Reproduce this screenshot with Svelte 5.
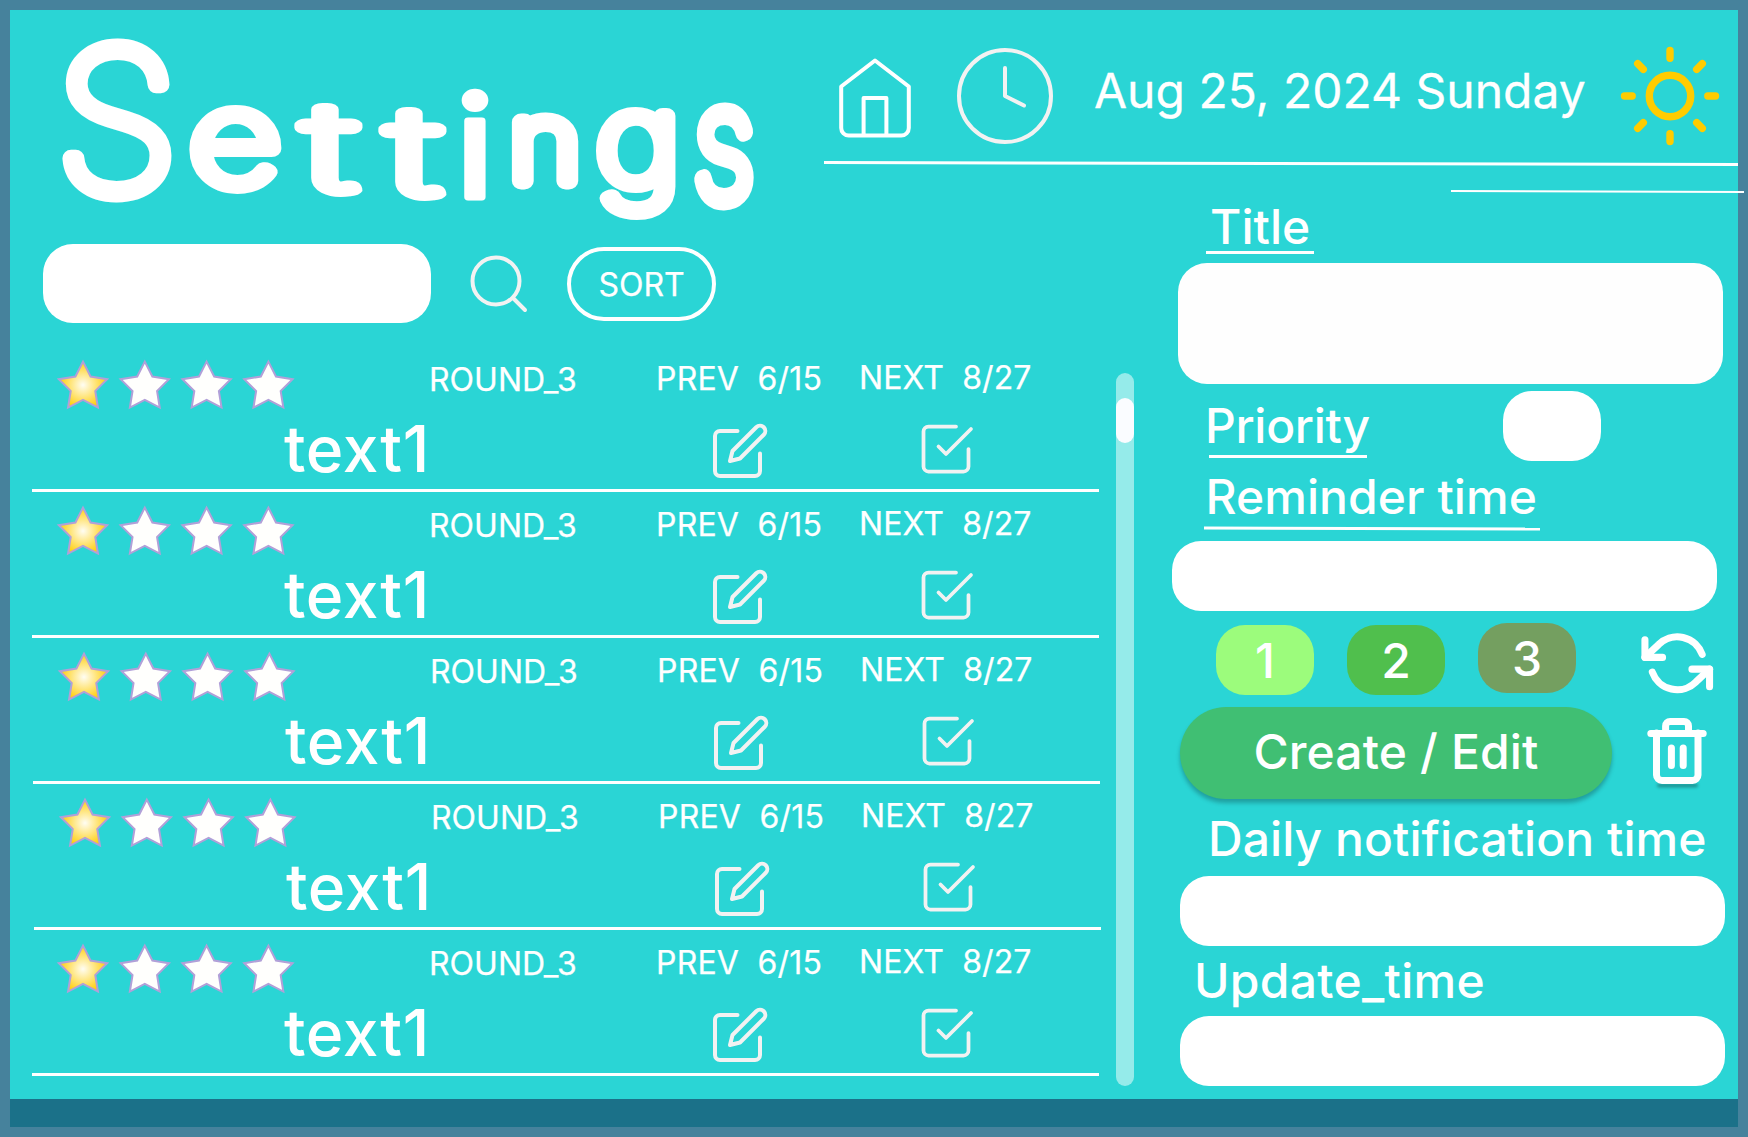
<script>
  // Horizontal nudge of each list row, in pixels.
  const rows = [0, 0, 1, 2, 0].map((shift, id) => ({
    id, shift, title: 'text1', round: 'ROUND_3', prev: '6/15', next: '8/27', rating: 1
  }));

  const stars = [0, 1, 2, 3];

  function starPoints(cx, cy, outer, inner) {
    return Array.from({ length: 10 }, (_, i) => {
      const r = i % 2 ? inner : outer;
      const a = (Math.PI / 5) * i;
      return `${(cx + r * Math.sin(a)).toFixed(2)},${(cy - r * Math.cos(a)).toFixed(2)}`;
    }).join(' ');
  }

  // Centre x, baseline, size, horizontal stretch, weight and outline of each letter.
  const logo = [
    { c: 'S', x: 117, y: 192, size: 196, sx: 1.02, w: 100, line: 17 },
    { c: 'e', x: 235, y: 184, size: 128, sx: 1.25, w: 100, line: 16 },
    { c: 't', x: 330, y: 190, size: 120, sx: 1.75, w: 100, line: 13 },
    { c: 't', x: 414, y: 194, size: 120, sx: 1.75, w: 100, line: 13 },
    { c: 'i', x: 475, y: 197, size: 140, sx: 1.1, w: 400, line: 7 },
    { c: 'n', x: 545, y: 181, size: 108, sx: 1.12, w: 100, line: 17 },
    { c: 'g', x: 638, y: 185, size: 126, sx: 1.15, w: 100, line: 16 },
    { c: 's', x: 724, y: 199, size: 158, sx: 0.78, w: 100, line: 19 }
  ];

  const badges = [
    { label: '1', tone: 'lime' },
    { label: '2', tone: 'green' },
    { label: '3', tone: 'olive' }
  ];
</script>

<div class="screen">
  <div class="top">
    <svg class="logo" viewBox="10 10 790 215" width="790" height="215">
      {#each logo as g}
        <text transform="translate({g.x} {g.y}) scale({g.sx} 1)" font-size={g.size} font-weight={g.w} stroke-width={g.line}>{g.c}</text>
      {/each}
    </svg>

    <header>
      <div class="bar">
        <svg class="home" viewBox="838 56 76 84" width="76" height="84">
          <path d="M841.2 86.5 L875 60.5 L908.8 86.5 V128 a7.5 7.5 0 0 1 -7.5 7.5 H848.7 a7.5 7.5 0 0 1 -7.5 -7.5 Z" />
          <path d="M863.6 135 V98 H886.4 V135" />
        </svg>
        <svg class="clock" viewBox="0 0 96 96" width="96" height="96">
          <circle cx="48" cy="48" r="46" />
          <path d="M48 20V48L67 57.5" />
        </svg>
        <span class="date">Aug 25, 2024 Sunday</span>
        <svg class="sun" viewBox="-50 -50 100 100" width="100" height="100">
          <circle r="20.7" />
          <path d="M0 -45.5V-37.8M0 45.5V37.8M-45.5 0H-37.8M45.5 0H37.8M-32.3 -32.3L-26.7 -26.7M32.3 -32.3L26.7 -26.7M-32.3 32.3L-26.7 26.7M32.3 32.3L26.7 26.7" />
        </svg>
      </div>
      <svg class="rules" viewBox="824 158 924 40" width="924" height="40">
        <line x1="824" y1="162.5" x2="1738" y2="164.5" stroke-width="3" />
        <line x1="1451" y1="190.9" x2="1744" y2="192" stroke-width="2" />
      </svg>
    </header>
  </div>

  <div class="body">
    <section class="left">
      <div class="toolbar">
        <div class="search"></div>
        <svg class="lens" viewBox="468 253 60 60" width="60" height="60">
          <circle cx="496" cy="281" r="23.5" />
          <path d="M513.5 298.5L525 310" />
        </svg>
        <div class="sort">SORT</div>
      </div>

      <div class="list">
        {#each rows as row (row.id)}
          <article class="row" style:--shift="{row.shift}px">
            <div class="meta">
              <svg class="stars" viewBox="56 358 240 54" width="240" height="54">
                <defs>
                  <radialGradient id="gold{row.id}" gradientUnits="userSpaceOnUse" cx="83" cy="385" r="25">
                    <stop offset="0" stop-color="#fffdf3" />
                    <stop offset="1" stop-color="#ffcc00" />
                  </radialGradient>
                </defs>
                {#each stars as s}
                  <polygon
                    points={starPoints(83 + s * 61.8, 387, 25.4, 12.9)}
                    fill={s < row.rating ? `url(#gold${row.id})` : '#fffffd'}
                  />
                {/each}
              </svg>
              <span class="round">{row.round}</span>
              <span class="prev">PREV&nbsp; {row.prev}</span>
              <span class="next">NEXT&nbsp; {row.next}</span>
            </div>
            <div class="main">
              <span class="title">{row.title}</span>
              <svg class="edit" viewBox="0 0 24 24" width="60" height="60">
                <path d="M11 4H4a2 2 0 0 0-2 2v14a2 2 0 0 0 2 2h14a2 2 0 0 0 2-2v-7" />
                <path d="M18.5 2.5a2.121 2.121 0 0 1 3 3L12 15l-4 1 1-4 9.5-9.5z" />
              </svg>
              <svg class="check" viewBox="0 0 24 24" width="60" height="60">
                <path d="M9 11l3 3L22 4" />
                <path d="M21 12v7a2 2 0 0 1-2 2H5a2 2 0 0 1-2-2V5a2 2 0 0 1 2-2h11" />
              </svg>
            </div>
          </article>
        {/each}
      </div>
    </section>

    <div class="track"><div class="thumb"></div></div>

    <section class="form">
      <div class="label name">Title</div>
      <div class="field tall"></div>
      <div class="priority">
        <div class="label">Priority</div>
        <div class="pill"></div>
      </div>
      <div class="label reminder">Reminder time</div>
      <div class="field remind"></div>
      <div class="badges">
        {#each badges as b}
          <div class="badge {b.tone}">{b.label}</div>
        {/each}
        <svg class="refresh" viewBox="0 0 24 24" width="70.5" height="70.5">
          <path d="M1 4v6h6M23 20v-6h-6" />
          <path d="M20.49 9A9 9 0 0 0 5.64 5.64L1 10m22 4l-4.64 4.36A9 9 0 0 1 3.51 15" />
        </svg>
      </div>
      <div class="actions">
        <div class="create">Create / Edit</div>
        <svg class="trash" viewBox="1645 715 66 78" width="66" height="78">
          <path class="shade" d="M1659 785.5H1696" />
          <path d="M1650.8 733.4H1703.2M1665.6 733V726a4.5 4.5 0 0 1 4.5 -4.5H1684a4.5 4.5 0 0 1 4.5 4.5V733M1656.5 733V775a5.5 5.5 0 0 0 5.5 5.5H1692.5a5.5 5.5 0 0 0 5.5 -5.5V733" />
          <path d="M1671.4 748V765.5M1683.2 748V765.5" />
        </svg>
      </div>
      <div class="label daily">Daily notification time</div>
      <div class="field daily-field"></div>
      <div class="label update">Update_time</div>
      <div class="field update-field"></div>
    </section>
  </div>

  <footer></footer>
</div>

<style>
  :global(body) {
    margin: 0;
    overflow: hidden;
  }
  .screen {
    box-sizing: border-box;
    width: 1748px;
    height: 1137px;
    border: 10px solid #46829c;
    background: #2ad5d5;
    color: #fff;
    font-family: Inter, 'Liberation Sans', sans-serif;
    font-weight: 400;
    display: flex;
    flex-direction: column;
    white-space: nowrap;
  }
  svg {
    display: block;
    flex: none;
    overflow: visible;
    fill: none;
    stroke: #f2f2f2;
    stroke-width: 4;
    stroke-linecap: round;
    stroke-linejoin: round;
  }
  .top {
    height: 190px;
    display: flex;
  }
  .logo text {
    text-anchor: middle;
    fill: #fff;
    stroke: #fff;
  }
  header {
    margin-left: 24px;
    width: 924px;
    flex: none;
  }
  .bar {
    display: flex;
    align-items: flex-start;
    height: 148px;
    padding-top: 24px;
    box-sizing: border-box;
  }
  .home {
    stroke: #fff;
    margin: 22px 0 0 14px;
  }
  .clock {
    margin: 14px 0 0 43px;
  }
  .date {
    margin: 15px 0 0 41px;
    width: 526px;
    font-size: 48px;
    line-height: 84px;
    -webkit-text-stroke: 0.3px #fff;
  }
  .sun {
    margin-top: 12px;
    stroke: #fc0;
    stroke-width: 7.4;
  }
  .rules {
    stroke: #fff;
    position: relative;
    z-index: 1;
  }
  .rules line {
    stroke-linecap: butt;
  }
  .body {
    display: flex;
    height: 899px;
  }
  .left {
    width: 1089px;
    padding: 44px 0 0 22px;
    box-sizing: border-box;
    flex: none;
  }
  .toolbar {
    display: flex;
    height: 79px;
    padding-left: 11px;
  }
  .search {
    width: 388px;
    border-radius: 30px;
    background: #fff;
  }
  .lens {
    margin: 9px 0 0 37px;
  }
  .sort {
    box-sizing: border-box;
    width: 149px;
    height: 74px;
    margin: 3px 0 0 39px;
    border: 4px solid #fff;
    border-radius: 37px;
    font-size: 32px;
    line-height: 67px;
    text-align: center;
    -webkit-text-stroke: 0.25px #fff;
  }
  .list {
    margin-top: 23px;
  }
  .row {
    height: 143px;
    width: 1067px;
    border-bottom: 3px solid #fff;
    margin-left: var(--shift);
  }
  .meta {
    display: grid;
    grid-template-columns: 373px 227px 203px 1fr;
    padding-left: 24px;
    height: 66px;
    font-size: 32px;
    -webkit-text-stroke: 0.25px #fff;
  }
  .stars {
    margin-top: 12px;
    stroke: #b1a0d8;
    stroke-width: 2;
    stroke-linejoin: miter;
    stroke-miterlimit: 10;
  }
  .round {
    line-height: 68px;
  }
  .prev {
    line-height: 66px;
    letter-spacing: 0.2px;
  }
  .next {
    line-height: 64px;
    letter-spacing: 0.1px;
  }
  .main {
    display: flex;
    height: 77px;
    padding-left: 252px;
  }
  .title {
    width: 425.7px;
    font-size: 64px;
    font-weight: 500;
    line-height: 74px;
    letter-spacing: 0.7px;
  }
  .edit {
    margin-top: 8.8px;
    stroke-width: 1.6;
  }
  .check {
    margin: 6.8px 0 0 146px;
    stroke-width: 1.5;
  }
  .track {
    width: 18px;
    height: 713px;
    margin: 173px 0 0 17px;
    border-radius: 9px;
    background: #95ebea;
    flex: none;
  }
  .thumb {
    height: 45px;
    margin-top: 25px;
    border-radius: 9px;
    background: #fafcff;
  }
  .form {
    width: 604px;
    padding: 3px 0 0 38px;
    box-sizing: border-box;
    flex: none;
    font-weight: 500;
  }
  .label {
    box-sizing: border-box;
    width: max-content;
    font-size: 48px;
    line-height: 48px;
    letter-spacing: 0.05px;
  }
  .name {
    width: 108px;
    margin-left: 34px;
    padding-left: 4px;
    border-bottom: 3px solid #fff;
  }
  .field {
    width: 545px;
    height: 70px;
    border-radius: 29px;
    background: #fff;
  }
  .tall {
    height: 121px;
    margin: 9px 0 0 6px;
    background: #fefefe;
  }
  .priority {
    display: flex;
    height: 70px;
    margin-top: 7px;
    padding-left: 37px;
  }
  .priority .label {
    width: 158px;
    height: 56px;
    margin-top: 10.5px;
    text-indent: -4px;
    letter-spacing: -0.3px;
    border-bottom: 3px solid #fff;
  }
  .pill {
    width: 97.5px;
    margin-left: 136px;
    border-radius: 29px;
    background: #fff;
  }
  .reminder {
    width: 336px;
    height: 57px;
    margin: 12px 0 0 32px;
    text-indent: 1.5px;
  }
  .reminder::after {
    content: '';
    display: block;
    height: 3px;
    margin-top: 6px;
    background: #fff;
    transform: rotate(0.2deg);
  }
  .remind {
    margin-top: 11px;
  }
  .badges {
    display: flex;
    height: 72px;
    margin-top: 12px;
    padding-left: 44px;
  }
  .badge {
    width: 98px;
    height: 70px;
    margin: 2px 33px 0 0;
    border-radius: 29px;
    font-size: 48px;
    line-height: 71px;
    text-align: center;
  }
  .lime {
    background: #9cfc7c;
  }
  .green {
    background: #50bf4d;
  }
  .olive {
    margin-top: 0;
    background: #749f60;
  }
  .refresh {
    margin: 5px 0 0 32.5px;
    stroke: #fff;
    stroke-width: 2.4;
  }
  .actions {
    display: flex;
    height: 92px;
    margin-top: 12px;
    padding-left: 8px;
  }
  .create {
    width: 432px;
    border-radius: 46px;
    background: #40bf73;
    box-shadow: 0 4px 4px rgba(0, 0, 0, 0.25);
    font-size: 48px;
    line-height: 90px;
    letter-spacing: 0.15px;
    text-align: center;
  }
  .trash {
    margin: 8px 0 0 33px;
    stroke: #fff;
    stroke-width: 7;
  }
  .trash .shade {
    stroke: rgba(0, 0, 0, 0.3);
    stroke-width: 4;
    filter: blur(1.5px);
  }
  .daily {
    margin: 16px 0 0 36px;
  }
  .daily-field {
    margin: 13px 0 0 8px;
  }
  .update {
    margin: 11px 0 0 22px;
    letter-spacing: 0.3px;
  }
  .update-field {
    margin: 11px 0 0 8px;
  }
  footer {
    height: 28px;
    background: #1b7189;
  }
</style>
